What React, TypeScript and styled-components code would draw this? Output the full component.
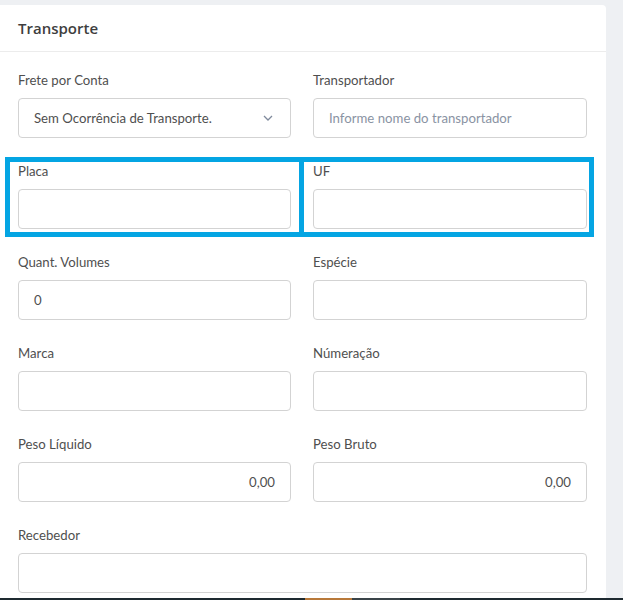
import React from 'react'
import styled, { createGlobalStyle } from 'styled-components'

const GlobalStyle = createGlobalStyle`
  html, body {
    margin: 0;
    padding: 0;
    background: #eef0f3;
    font-family: Lato, "Open Sans", sans-serif;
  }
  body {
    height: 600px;
    overflow: hidden;
  }
`

const Page = styled.div`
  padding: 5px 17px 0 0;
`

const Card = styled.section`
  background: #fff;
  border-radius: 0 4px 0 0;
  min-height: 595px;
`

const CardHeader = styled.header`
  height: 46px;
  display: flex;
  align-items: center;
  padding: 0 18px;
  border-bottom: 1px solid #ececec;
  font-family: "Open Sans", Lato, sans-serif;
  font-size: 15px;
  font-weight: 600;
  color: #3e3e3e;
`

const Body = styled.div`
  padding: 19px 0 0 18px;
  display: flex;
  flex-direction: column;
  gap: 24px;
`

const Row = styled.div<{ $single?: boolean }>`
  position: relative;
  display: grid;
  grid-template-columns: ${p => (p.$single ? '569px' : '273px 274px')};
  column-gap: 22px;
`

const Field = styled.div`
  display: flex;
  flex-direction: column;
`

const Label = styled.label`
  font-size: 13.2px;
  line-height: 18px;
  color: #4f4f4f;
  margin-bottom: 9px;
`

const Box = styled.div<{ $align?: 'left' | 'right' }>`
  height: 40px;
  box-sizing: border-box;
  border: 1px solid #d3d3d3;
  border-radius: 4px;
  display: flex;
  align-items: center;
  justify-content: ${p => (p.$align === 'right' ? 'flex-end' : 'space-between')};
  padding: ${p => (p.$align === 'right' ? '0 15px 0 15px' : '0 15px')};
  font-size: 13.2px;
  color: #4f4f4f;
  background: #fff;
`

const Placeholder = styled.span`
  color: #8a93a3;
`

const Chevron = styled.svg`
  width: 10px;
  height: 6px;
  margin-right: 2px;
`

const Highlight = styled.div`
  position: absolute;
  top: -5px;
  height: 80px;
  box-sizing: border-box;
  border: 5px solid #04a5e3;
  pointer-events: none;
`

const Taskbar = styled.div`
  position: fixed;
  left: 0;
  right: 0;
  bottom: 0;
  height: 2px;
  display: flex;
  background: #1e2a30;
`

const TaskSegment = styled.div<{ $color: string; $width: number }>`
  width: ${p => p.$width}px;
  background: ${p => p.$color};
`

type FieldProps = {
  label: string
  value?: string
  placeholder?: string
  align?: 'left' | 'right'
  select?: boolean
}

function FormField({ label, value, placeholder, align, select }: FieldProps) {
  return (
    <Field>
      <Label>{label}</Label>
      <Box $align={align}>
        {value ? <span>{value}</span> : placeholder ? <Placeholder>{placeholder}</Placeholder> : null}
        {select && (
          <Chevron viewBox="0 0 10 6">
            <polyline points="1,1 5,5 9,1" fill="none" stroke="#7f8a9c" strokeWidth="1.3" />
          </Chevron>
        )}
      </Box>
    </Field>
  )
}

export default function App() {
  return (
    <>
      <GlobalStyle />
      <Page>
        <Card>
          <CardHeader>Transporte</CardHeader>
          <Body>
            <Row>
              <FormField label="Frete por Conta" value="Sem Ocorrência de Transporte." select />
              <FormField label="Transportador" placeholder="Informe nome do transportador" />
            </Row>
            <Row>
              <FormField label="Placa" />
              <FormField label="UF" />
              <Highlight style={{ left: -13, width: 299 }} />
              <Highlight style={{ left: 281, width: 295 }} />
            </Row>
            <Row>
              <FormField label="Quant. Volumes" value="0" />
              <FormField label="Espécie" />
            </Row>
            <Row>
              <FormField label="Marca" />
              <FormField label="Númeração" />
            </Row>
            <Row>
              <FormField label="Peso Líquido" value="0,00" align="right" />
              <FormField label="Peso Bruto" value="0,00" align="right" />
            </Row>
            <Row $single>
              <FormField label="Recebedor" />
            </Row>
          </Body>
        </Card>
      </Page>
      <Taskbar>
        <TaskSegment $color="#1e2a30" $width={305} />
        <TaskSegment $color="#b8793a" $width={47} />
        <TaskSegment $color="#3a4348" $width={48} />
      </Taskbar>
    </>
  )
}
